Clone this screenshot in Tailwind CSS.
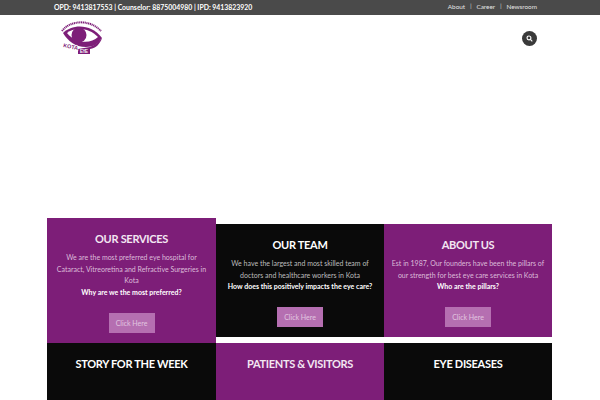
<!DOCTYPE html>
<html lang="en">
<head>
  <meta charset="UTF-8" />
  <title>Kota Eye Hospital</title>
  <script src="https://cdn.jsdelivr.net/npm/@tailwindcss/browser@4"></script>
</head>
<body class="bg-white h-[400px] overflow-hidden font-['Lato',sans-serif]">

  <!-- top bar -->
  <div class="h-[15px] bg-[#4a4a4a] flex items-center justify-between pl-[54px] pr-[63px] text-white">
    <p class="text-[6.9px] font-bold leading-[15px]">OPD: 9413817553 | Counselor: 8875004980 | IPD: 9413823920</p>
    <div class="flex items-center gap-[5px] text-[6.4px] leading-[15px] text-[#e4e4e4] -mt-[3px]">
      <a>About</a><span class="text-[5px]">|</span><a>Career</a><span class="text-[5px]">|</span><a>Newsroom</a>
    </div>
  </div>

  <!-- header -->
  <div class="h-[203px] flex items-start justify-between pl-[60px] pr-[63px]">
    <svg class="mt-[5px]" width="44" height="34" viewBox="0 0 44 34">
      <path d="M2 11 C10 0 30 -1 41 11" fill="none" stroke="#7d1e78" stroke-width="2" stroke-dasharray="1.2 .6" />
      <path d="M3 13 C12 4 31 3 42 18 C38 24 33 27 26 27 C15 27 8 21 3 13 Z" fill="#7d1e78" />
      <path d="M7 13 C14 7 29 7 38 17 C31 24 16 24 7 13 Z" fill="#fff" />
      <circle cx="19" cy="15" r="7.5" fill="#7d1e78" />
      <path d="M42 18 C40 24 36 28 30 29 L30 34 L18 34 L18 29 L30 27 C35 25 39 22 42 18 Z" fill="#7d1e78" />
      <text x="3" y="27" font-size="5.5" font-weight="900" fill="#7d1e78" stroke="#fff" stroke-width="1.2" paint-order="stroke" font-family="Liberation Sans" textLength="15" transform="rotate(12 3 27)">KOTA</text>
      <text x="20" y="33" font-size="4.5" font-weight="700" fill="#fff" font-family="Liberation Sans" textLength="8">EYE</text>
    </svg>
    <div class="mt-[16px] w-[15px] h-[15px] rounded-full bg-[#3a3a3a] flex items-center justify-center">
      <svg width="7" height="7" viewBox="0 0 8 8" fill="none" stroke="#fff" stroke-width="1.3">
        <circle cx="3.4" cy="3.4" r="2.2" /><path d="M5 5 L7.2 7.2" />
      </svg>
    </div>
  </div>

  <!-- cards -->
  <div class="ml-[47px] w-[505px] grid grid-cols-[169px_168px_168px] grid-rows-[125px_auto] items-start">

    <div class="h-[125px] bg-[#7d1e78] text-center pt-[14px]">
      <h3 class="text-[11px] leading-[14px] font-bold tracking-[-0.3px] text-[#f3e6f2]">OUR SERVICES</h3>
      <p class="mt-[6px] text-[7px] leading-[11.6px] text-[#dcbcd9]">
        <span class="block">We are the most preferred eye hospital for</span>
        <span class="block">Cataract, Vitreoretina and Refractive Surgeries in</span>
        <span class="block">Kota</span>
        <b class="block text-white">Why are we the most preferred?</b>
      </p>
      <a class="block mx-auto mt-[14.5px] w-[46px] h-[20px] bg-[#b56fb1] text-[#e2c6e0] text-[7px] leading-[20px]">Click Here</a>
    </div>

    <div class="mt-[6px] h-[113px] bg-[#0a0a0a] text-center pt-[14px]">
      <h3 class="text-[11px] leading-[14px] font-bold tracking-[-0.3px] text-white">OUR TEAM</h3>
      <p class="mt-[6px] text-[7px] leading-[11.6px] text-[#bdbdbd]">
        <span class="block">We have the largest and most skilled team of</span>
        <span class="block">doctors and healthcare workers in Kota</span>
        <b class="block text-white">How does this positively impacts the eye care?</b>
      </p>
      <a class="block mx-auto mt-[14.5px] w-[46px] h-[20px] bg-[#b56fb1] text-[#e2c6e0] text-[7px] leading-[20px]">Click Here</a>
    </div>

    <div class="mt-[6px] h-[113px] bg-[#7d1e78] text-center pt-[14px]">
      <h3 class="text-[11px] leading-[14px] font-bold tracking-[-0.3px] text-[#f3e6f2]">ABOUT US</h3>
      <p class="mt-[6px] text-[7px] leading-[11.6px] text-[#dcbcd9]">
        <span class="block">Est in 1987, Our founders have been the pillars of</span>
        <span class="block">our strength for best eye care services in Kota</span>
        <b class="block text-white">Who are the pillars?</b>
      </p>
      <a class="block mx-auto mt-[14.5px] w-[46px] h-[20px] bg-[#b56fb1] text-[#e2c6e0] text-[7px] leading-[20px]">Click Here</a>
    </div>

    <div class="h-[57px] bg-[#0a0a0a] text-center pt-[14px]">
      <h3 class="text-[11px] leading-[14px] font-bold tracking-[-0.3px] text-white">STORY FOR THE WEEK</h3>
    </div>
    <div class="h-[57px] bg-[#7d1e78] text-center pt-[14px]">
      <h3 class="text-[11px] leading-[14px] font-bold tracking-[-0.3px] text-[#f3e6f2]">PATIENTS &amp; VISITORS</h3>
    </div>
    <div class="h-[57px] bg-[#0a0a0a] text-center pt-[14px]">
      <h3 class="text-[11px] leading-[14px] font-bold tracking-[-0.3px] text-white">EYE DISEASES</h3>
    </div>
  </div>

</body>
</html>
